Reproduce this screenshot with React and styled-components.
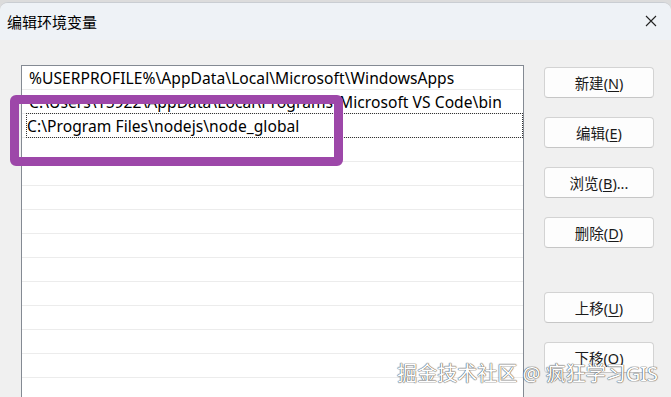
import React from 'react';
import styled, { createGlobalStyle } from 'styled-components';

const GlobalStyle = createGlobalStyle`
  html, body {
    margin: 0;
    padding: 0;
    background: #dcdcdc;
    overflow: hidden;
  }
  body {
    font-family: "Noto Sans", "Noto Sans CJK SC", sans-serif;
    color: #000;
  }
`;

const Window = styled.div`
  position: relative;
  width: 671px;
  height: 397px;
  margin-top: 2px;
  border-top: 1px solid #c9cdd2;
  border-radius: 8px 8px 0 0;
  background: #f0f0f0;
  overflow: hidden;
  display: flex;
  flex-direction: column;
`;

const TitleBar = styled.div`
  height: 37px;
  flex: none;
  background: #eef2f6;
  display: flex;
  align-items: center;
  justify-content: space-between;
  padding: 0 14px 0 7px;
`;

const Title = styled.span`
  font-size: 15px;
  margin-top: -1px;
`;

const Close = styled.svg`
  width: 12px;
  height: 12px;
  margin-top: -2px;
`;

const Body = styled.div`
  flex: 1;
  display: flex;
  gap: 20px;
  padding: 25px 17px 0 21px;
`;

const List = styled.div`
  width: 503px;
  height: 360px;
  box-sizing: border-box;
  border: 1px solid #848a93;
  border-bottom: none;
  background: #fff;
  flex: none;
`;

const Row = styled.div`
  position: relative;
  height: 23px;
  border-bottom: 1px solid #ececec;
  font-size: 15.6px;
  letter-spacing: 0.05px;
  line-height: 25px;
  padding-left: ${p => (p.$focused ? 5 : 7)}px;
  white-space: nowrap;
  overflow: hidden;
  ${p => p.$focused && `
    overflow: visible;
    &::after {
      content: '';
      position: absolute;
      left: 4px;
      right: 0;
      top: -1px;
      bottom: -1px;
      border: 1px dotted #333;
    }
  `}
`;

const Buttons = styled.div`
  width: 110px;
  padding-top: 2px;
  display: flex;
  flex-direction: column;
  gap: 19px;
`;

const Button = styled.button`
  height: 31px;
  box-sizing: border-box;
  border: 1px solid #d3d3d3;
  border-bottom-color: #c6c6c6;
  border-radius: 4px;
  background: #fdfdfd;
  font-family: "Noto Sans", "Noto Sans CJK SC", sans-serif;
  font-size: 14.5px;
  color: #1a1a1a;
  padding: 0;
  margin-top: ${p => p.$gap || 0}px;
  & u {
    text-underline-offset: 2px;
  }
`;

const Highlight = styled.div`
  position: absolute;
  left: 10px;
  top: 92px;
  width: 333px;
  height: 71px;
  box-sizing: border-box;
  border: 9px solid #9d47a9;
  border-radius: 6px;
`;

const Watermark = styled.div`
  position: absolute;
  right: 13px;
  bottom: 13px;
  font-size: 20px;
  color: #fff;
  white-space: nowrap;
  text-shadow: 0 0 1px #555, 0 0 1px #555, 0 0 1px #777;
`;

const rows = [
  '%USERPROFILE%\\AppData\\Local\\Microsoft\\WindowsApps',
  'C:\\Users\\15922\\AppData\\Local\\Programs\\Microsoft VS Code\\bin',
  'C:\\Program Files\\nodejs\\node_global',
  '', '', '', '', '', '', '', '', '', '', '', '',
];

const buttons = [
  { label: '新建', key: 'N' },
  { label: '编辑', key: 'E' },
  { label: '浏览', key: 'B', more: '...' },
  { label: '删除', key: 'D' },
  { label: '上移', key: 'U', gap: 25 },
  { label: '下移', key: 'O' },
];

export default function App() {
  return (
    <>
      <GlobalStyle />
      <Window>
        <TitleBar>
          <Title>编辑环境变量</Title>
          <Close viewBox="0 0 12 12">
            <path d="M1 1 L11 11 M11 1 L1 11" stroke="#222" strokeWidth="1.1" fill="none" />
          </Close>
        </TitleBar>
        <Body>
          <List>
            {rows.map((r, i) => (
              <Row key={i} $focused={i === 2}>{r}</Row>
            ))}
          </List>
          <Buttons>
            {buttons.map(b => (
              <Button key={b.key} $gap={b.gap}>
                {b.label}(<u>{b.key}</u>){b.more}
              </Button>
            ))}
          </Buttons>
        </Body>
        <Highlight />
        <Watermark>掘金技术社区 @ 疯狂学习GIS</Watermark>
      </Window>
    </>
  );
}
